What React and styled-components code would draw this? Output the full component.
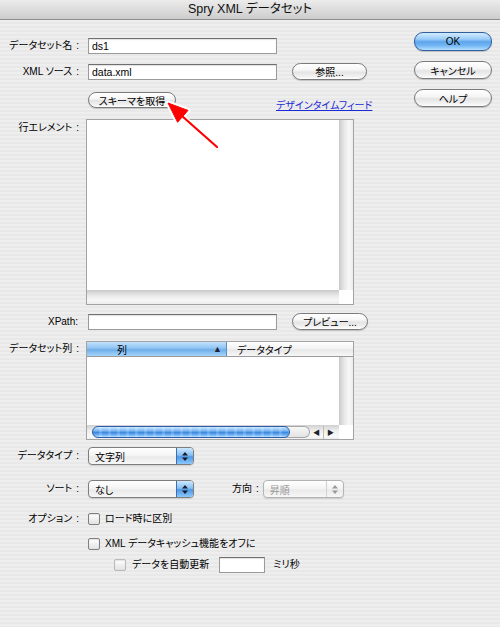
import React from "react";
import styled, { createGlobalStyle, css } from "styled-components";

const Global = createGlobalStyle`
  html, body { margin: 0; padding: 0; background: #ececec; }
  body {
    font-family: "Liberation Sans", "Noto Sans CJK JP", sans-serif;
    font-feature-settings: "palt";
  }
`;

const Window = styled.div`
  position: relative;
  width: 500px;
  height: 627px;
  overflow: hidden;
  background: repeating-linear-gradient(
    180deg,
    #eeeeee 0px,
    #eeeeee 2px,
    #e8e8e8 2px,
    #e8e8e8 4px
  );
  color: #000;
  font-size: 10px;
`;

const TitleBar = styled.div`
  height: 19px;
  border-bottom: 1px solid #8e8e8e;
  background: linear-gradient(#ececec, #d9d9d9 60%, #cdcdcd);
  text-align: center;
  font-size: 12.5px;
  line-height: 19px;
  color: #111;
`;

const Main = styled.div`
  display: flex;
`;

const Form = styled.div`
  flex: 0 0 400px;
  display: flex;
  flex-direction: column;
  padding-top: 18px;
`;

const Row = styled.div`
  display: grid;
  grid-template-columns: 81px 1fr;
  column-gap: 7px;
  height: ${(p) => p.$h}px;
  align-items: ${(p) => (p.$top ? "start" : "center")};
  margin-top: ${(p) => p.$mt || 0}px;
`;

const Label = styled.div`
  text-align: right;
  white-space: nowrap;
  font-size: 10px;
  line-height: 12px;
  padding-top: ${(p) => p.$pt || 0}px;
  padding-right: ${(p) => p.$pr || 0}px;
`;

const Colon = styled.span`
  margin-left: 4px;
  margin-right: 2px;
`;

const Cell = styled.div`
  display: flex;
  align-items: center;
  height: 100%;
  padding-left: ${(p) => p.$indent || 0}px;
`;

const TextInput = styled.div`
  box-sizing: border-box;
  width: ${(p) => p.$w}px;
  height: ${(p) => p.$h || 16}px;
  background: #fff;
  border: 1px solid #9a9a9a;
  border-top-color: #6f6f6f;
  box-shadow: inset 0 1px 1px rgba(0, 0, 0, 0.12);
  padding-left: 3px;
  font-size: 10.5px;
  line-height: 14px;
  margin-left: ${(p) => p.$ml || 0}px;
`;

const AquaButton = styled.div`
  box-sizing: border-box;
  width: ${(p) => p.$w}px;
  height: ${(p) => p.$h || 17}px;
  margin-left: ${(p) => p.$ml || 0}px;
  border-radius: 9px;
  border: 1px solid #7a7a7a;
  background: linear-gradient(
    #ffffff 0%,
    #f6f6f6 40%,
    #e4e4e4 55%,
    #f2f2f2 85%,
    #ffffff 100%
  );
  box-shadow: 0 1px 1px rgba(0, 0, 0, 0.18);
  display: flex;
  align-items: center;
  justify-content: center;
  font-size: 10px;
  white-space: nowrap;
  ${(p) =>
    p.$primary &&
    css`
      border-color: #2f5f9f;
      background: linear-gradient(
        #d2ebff 0%,
        #9ccdf8 35%,
        #5fa5ec 52%,
        #74b7f4 75%,
        #b6e0ff 100%
      );
    `}
`;

const Link = styled.span`
  margin-left: 100px;
  align-self: flex-end;
  margin-bottom: -4px;
  color: #1d2bd6;
  text-decoration: underline;
  font-size: 10px;
  line-height: 12px;
  white-space: nowrap;
`;

const ListBox = styled.div`
  box-sizing: border-box;
  width: 268px;
  height: ${(p) => p.$h}px;
  margin-left: -2px;
  border: 1px solid #a3a3a3;
  background: #fff;
  display: grid;
  grid-template-columns: 1fr 14px;
  grid-template-rows: ${(p) => (p.$header ? "15px 1fr 14px" : "1fr 14px")};
`;

const Pane = styled.div`
  background: #fff;
`;

const VTrack = styled.div`
  background: linear-gradient(90deg, #c9c9c9 0%, #e6e6e6 35%, #f7f7f7 70%, #ededed 100%);
`;

const HTrack = styled.div`
  background: linear-gradient(180deg, #c9c9c9 0%, #e6e6e6 35%, #f7f7f7 70%, #ededed 100%);
`;

const Corner = styled.div`
  background: #fff;
`;

const Header = styled.div`
  grid-column: 1 / span 2;
  display: flex;
  border-bottom: 1px solid #9a9a9a;
`;

const HeadCell = styled.div`
  box-sizing: border-box;
  display: flex;
  align-items: center;
  font-size: 10px;
  ${(p) =>
    p.$active
      ? css`
          width: 140px;
          padding-left: 30px;
          padding-right: 4px;
          justify-content: space-between;
          border-right: 1px solid #5b8ec9;
          background: linear-gradient(#c2e2fd 0%, #8fc3f2 45%, #6eaeea 55%, #a7d5fb 100%);
        `
      : css`
          flex: 1;
          padding-left: 10px;
          background: linear-gradient(#ffffff, #f1f1f1 50%, #e7e7e7 55%, #f7f7f7);
        `}
`;

const SortArrow = styled.span`
  font-size: 9px;
  color: #223;
`;

const HScroller = styled.div`
  display: flex;
  align-items: center;
  padding-left: 5px;
  background: linear-gradient(180deg, #d0d0d0 0%, #eeeeee 40%, #f9f9f9 80%, #efefef 100%);
`;

const Thumb = styled.div`
  position: relative;
  z-index: 1;
  box-sizing: border-box;
  width: 198px;
  height: 12px;
  border-radius: 7px;
  border: 1px solid #2a5ca8;
  background: repeating-linear-gradient(90deg, rgba(255,255,255,0) 0 6px, rgba(255,255,255,0.18) 6px 9px),
    linear-gradient(#cfe8ff 0%, #7fbaf2 35%, #3f8be0 55%, #6cb0f4 80%, #bfe2ff 100%);
`;

const TrackCap = styled.div`
  box-sizing: border-box;
  width: 28px;
  height: 12px;
  margin-left: -8px;
  border: 1px solid #a8a8a8;
  border-left: none;
  border-radius: 0 7px 7px 0;
  background: linear-gradient(#f8f8f8, #e3e3e3);
`;

const ArrowBtn = styled.div`
  width: 13px;
  height: 13px;
  display: flex;
  align-items: center;
  justify-content: center;
  border-left: ${(p) => (p.$sep ? "1px solid #bdbdbd" : "none")};
  font-size: 7px;
  color: #222;
`;

const Select = styled.div`
  box-sizing: border-box;
  width: ${(p) => p.$w}px;
  height: 18px;
  margin-left: ${(p) => p.$ml || 0}px;
  border: 1px solid ${(p) => (p.$disabled ? "#b3b3b3" : "#7d7d7d")};
  border-radius: 4px;
  background: linear-gradient(#ffffff, #f3f3f3 50%, #e9e9e9 55%, #f7f7f7);
  box-shadow: 0 1px 1px rgba(0, 0, 0, 0.12);
  display: flex;
  align-items: stretch;
  overflow: hidden;
  font-size: 10px;
  color: ${(p) => (p.$disabled ? "#9a9a9a" : "#000")};
`;

const SelectText = styled.div`
  flex: 1;
  display: flex;
  align-items: center;
  padding-left: 6px;
`;

const Stepper = styled.div`
  width: 16px;
  display: flex;
  align-items: center;
  justify-content: center;
  border-left: 1px solid ${(p) => (p.$disabled ? "#d0d0d0" : "#3d6fb3")};
  background: ${(p) =>
    p.$disabled
      ? "transparent"
      : "linear-gradient(#cde8ff 0%, #86c0f4 45%, #4e98e6 55%, #8cc9fb 100%)"};
`;

const InlineLabel = styled.span`
  margin-left: ${(p) => p.$ml || 0}px;
  font-size: 10px;
  line-height: 12px;
  white-space: nowrap;
`;

const Check = styled.div`
  box-sizing: border-box;
  width: 12px;
  height: 12px;
  border-radius: 2px;
  border: 1px solid ${(p) => (p.$disabled ? "#b8b8b8" : "#7f7f7f")};
  background: linear-gradient(#ffffff, #f0f0f0 50%, #e2e2e2);
  box-shadow: inset 0 1px 1px rgba(0, 0, 0, 0.1);
`;

const ButtonCol = styled.div`
  display: flex;
  flex-direction: column;
  gap: 10px;
  margin-left: 14px;
  padding-top: 12px;
`;

const ArrowOverlay = styled.svg`
  position: absolute;
  left: 160px;
  top: 95px;
  width: 70px;
  height: 60px;
  overflow: visible;
`;

function StepperIcon({ disabled }) {
  const c = disabled ? "#9a9a9a" : "#1a1a2a";
  return (
    <svg width="6" height="9" viewBox="0 0 6 9">
      <polygon points="3,0 6,3.5 0,3.5" fill={c} />
      <polygon points="0,5.5 6,5.5 3,9" fill={c} />
    </svg>
  );
}

export default function App() {
  return (
    <>
      <Global />
      <Window>
        <TitleBar>Spry XML データセット</TitleBar>
        <Main>
          <Form>
            <Row $h={16}>
              <Label>データセット名<Colon>:</Colon></Label>
              <Cell>
                <TextInput $w={189}>ds1</TextInput>
              </Cell>
            </Row>
            <Row $h={17} $mt={9}>
              <Label>XML ソース<Colon>:</Colon></Label>
              <Cell>
                <TextInput $w={189}>data.xml</TextInput>
                <AquaButton $w={75} $ml={15}>参照...</AquaButton>
              </Cell>
            </Row>
            <Row $h={16} $mt={12}>
              <Label />
              <Cell>
                <AquaButton $w={88} $h={16}>スキーマを取得</AquaButton>
                <Link>デザインタイムフィード</Link>
              </Cell>
            </Row>
            <Row $h={186} $mt={11} $top>
              <Label $pt={3}>行エレメント<Colon>:</Colon></Label>
              <Cell>
                <ListBox $h={186}>
                  <Pane />
                  <VTrack />
                  <HTrack />
                  <Corner />
                </ListBox>
              </Cell>
            </Row>
            <Row $h={17} $mt={8}>
              <Label $pr={3}>XPath:</Label>
              <Cell>
                <TextInput $w={189}></TextInput>
                <AquaButton $w={76} $ml={15}>プレビュー...</AquaButton>
              </Cell>
            </Row>
            <Row $h={99} $mt={11} $top>
              <Label $pt={2}>データセット列<Colon>:</Colon></Label>
              <Cell>
                <ListBox $h={99} $header>
                  <Header>
                    <HeadCell $active>
                      <span>列</span>
                      <SortArrow>▲</SortArrow>
                    </HeadCell>
                    <HeadCell>データタイプ</HeadCell>
                  </Header>
                  <Pane />
                  <VTrack />
                  <HScroller>
                    <Thumb />
                    <TrackCap />
                    <ArrowBtn>◀</ArrowBtn>
                    <ArrowBtn $sep>▶</ArrowBtn>
                  </HScroller>
                  <Corner />
                </ListBox>
              </Cell>
            </Row>
            <Row $h={18} $mt={7}>
              <Label>データタイプ<Colon>:</Colon></Label>
              <Cell>
                <Select $w={106}>
                  <SelectText>文字列</SelectText>
                  <Stepper>
                    <StepperIcon />
                  </Stepper>
                </Select>
              </Cell>
            </Row>
            <Row $h={18} $mt={15}>
              <Label>ソート<Colon>:</Colon></Label>
              <Cell>
                <Select $w={106}>
                  <SelectText>なし</SelectText>
                  <Stepper>
                    <StepperIcon />
                  </Stepper>
                </Select>
                <InlineLabel $ml={38}>方向<Colon>:</Colon></InlineLabel>
                <Select $w={81} $ml={2} $disabled>
                  <SelectText>昇順</SelectText>
                  <Stepper $disabled>
                    <StepperIcon disabled />
                  </Stepper>
                </Select>
              </Cell>
            </Row>
            <Row $h={12} $mt={15}>
              <Label>オプション<Colon>:</Colon></Label>
              <Cell>
                <Check />
                <InlineLabel $ml={5}>ロード時に区別</InlineLabel>
              </Cell>
            </Row>
            <Row $h={12} $mt={13}>
              <Label />
              <Cell>
                <Check />
                <InlineLabel $ml={5}>XML データキャッシュ機能をオフに</InlineLabel>
              </Cell>
            </Row>
            <Row $h={16} $mt={7}>
              <Label />
              <Cell $indent={26}>
                <Check $disabled />
                <InlineLabel $ml={6}>データを自動更新</InlineLabel>
                <TextInput $w={46} $h={16} $ml={10}></TextInput>
                <InlineLabel $ml={8}>ミリ秒</InlineLabel>
              </Cell>
            </Row>
          </Form>
          <ButtonCol>
            <AquaButton $w={78} $h={19} $primary>OK</AquaButton>
            <AquaButton $w={78} $h={18}>キャンセル</AquaButton>
            <AquaButton $w={78} $h={18}>ヘルプ</AquaButton>
          </ButtonCol>
        </Main>
        <ArrowOverlay viewBox="160 95 70 60">
          <g stroke="#fff" strokeWidth="5" strokeLinecap="round" strokeLinejoin="round" fill="#fff">
            <line x1="217" y1="147" x2="182" y2="116" />
            <polygon points="168,103 188,110.4 177.6,122.3" />
          </g>
          <g stroke="#ff0000" strokeWidth="2.2" strokeLinejoin="round" fill="#ff0000">
            <line x1="217" y1="147" x2="182" y2="116" strokeLinecap="round" />
            <polygon points="168,103 188,110.4 177.6,122.3" strokeWidth="1" />
          </g>
        </ArrowOverlay>
      </Window>
    </>
  );
}
